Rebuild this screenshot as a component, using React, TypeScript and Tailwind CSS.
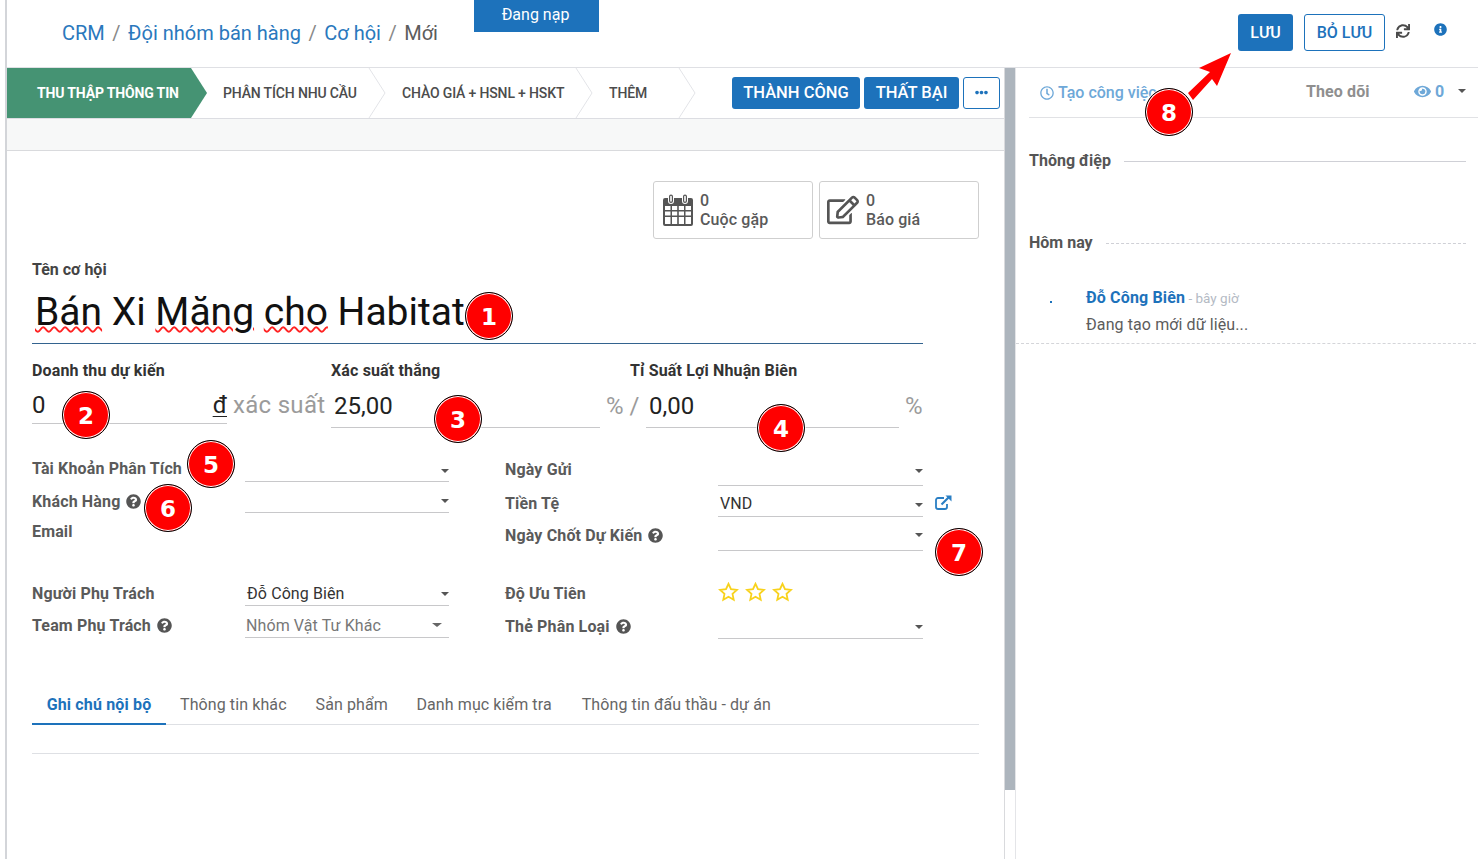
import React from "react";
import { FaRegEdit, FaQuestionCircle, FaInfoCircle, FaRegClock, FaEye, FaSync, FaEllipsisH } from "react-icons/fa";

const Help = () => <FaQuestionCircle className="inline-block ml-[6px] text-[15px] text-[#555] align-[-2px]" />;
const Caret = ({ className = "" }: { className?: string }) => (
  <span className={"w-0 h-0 border-x-[4px] border-x-transparent border-t-[4px] border-t-[#555] " + className} />
);

function Marker({ n, className }: { n: number; className: string }) {
  return (
    <div className={"absolute w-[48px] h-[48px] pt-[2px] rounded-full bg-[#ff0000] border border-black shadow-[inset_0_0_0_1px_#fff,0_0_0_1px_rgba(255,255,255,0.7)] flex items-center justify-center text-white text-[23px] font-bold font-['DejaVu_Sans',sans-serif] leading-none " + className}>
      {n}
    </div>
  );
}

function Stage({ label, className }: { label: string; className: string }) {
  return (
    <div className={"relative h-full flex items-center shrink-0 text-[14px] font-medium text-[#4c4c4c] tracking-[-0.15px] " + className}>
      {label}
      <svg className="absolute right-0 top-0" width="18" height="50" viewBox="0 0 18 50">
        <path d="M1 0 L17 25 L1 50" fill="none" stroke="#e3e4e8" strokeWidth="1" />
      </svg>
    </div>
  );
}

function Field({ value, muted, bar, caret = "", text = "", children }: { value?: string; muted?: boolean; bar: string; caret?: string; text?: string; children?: React.ReactNode }) {
  return (
    <div className={"relative flex items-center justify-between border-b border-[#c8c8ca] text-[16px] tracking-[0.1px] " + bar}>
      <span className={(muted ? "text-[#777] pl-[1px] " : "text-[#333] pl-[2px] ") + text}>{value}</span>
      <Caret className={caret} />
      {children}
    </div>
  );
}

function Label({ children, className = "" }: { children: React.ReactNode; className?: string }) {
  return <div className={"font-bold text-[16px] text-[#5a5a5a] tracking-[0.15px] whitespace-nowrap " + className}>{children}</div>;
}

function CalendarIcon() {
  return (
    <svg width="30" height="32" viewBox="0 0 30 32" fill="#555">
      <path fillRule="evenodd" d="M2 4h3v3a3 3 0 0 0 6 0V4h8v3a3 3 0 0 0 6 0V4h3a2 2 0 0 1 2 2v24a2 2 0 0 1-2 2H2a2 2 0 0 1-2-2V6a2 2 0 0 1 2-2Zm0 8v4h5.5v-4H2Zm7 0v4h5.2v-4H9Zm6.8 0v4H21v-4h-5.2Zm6.7 0v4H28v-4h-5.5ZM2 17.5v4h5.5v-4H2Zm7 0v4h5.2v-4H9Zm6.8 0v4H21v-4h-5.2Zm6.7 0v4H28v-4h-5.5ZM2 23v6.5a.5.5 0 0 0 .5.5h5v-7H2Zm7 0v7h5.2v-7H9Zm6.8 0v7H21v-7h-5.2Zm6.7 0v7h5a.5.5 0 0 0 .5-.5V23h-5.5Z" />
      <path fillRule="evenodd" d="M6 2.5a2 2 0 0 1 4 0V7a2 2 0 0 1-4 0V2.5Zm1.2 0V7a.8.8 0 0 0 1.6 0V2.5a.8.8 0 0 0-1.6 0ZM20 2.5a2 2 0 0 1 4 0V7a2 2 0 0 1-4 0V2.5Zm1.2 0V7a.8.8 0 0 0 1.6 0V2.5a.8.8 0 0 0-1.6 0Z" />
    </svg>
  );
}

function ExternalIcon() {
  return (
    <svg width="17" height="15" viewBox="0 0 17 15" fill="none" stroke="#2a7fc4" strokeWidth="1.8">
      <path d="M9 3H3a2 2 0 0 0-2 2v7a2 2 0 0 0 2 2h7a2 2 0 0 0 2-2V9" />
      <path d="M6.5 9.5 14 2" strokeWidth="2.2" />
      <path d="M10.5 0.5H16.5V6.5Z" fill="#2a7fc4" stroke="none" />
    </svg>
  );
}

const wavy = "underline decoration-wavy decoration-[#f22] decoration-[1.5px] underline-offset-[1px]";

export default function App() {
  const blueBtn = "bg-[#1d72bb] text-white rounded-[3px] font-medium flex items-center justify-center";
  return (
    <div className="relative w-[1478px] h-[859px] overflow-hidden bg-white font-['Roboto',sans-serif] text-[#333]">
      <div className="ml-[5px] h-full border-l-2 border-[#d3d5d9] flex flex-col">
        {/* header */}
        <header className="h-[67px] shrink-0 flex items-start justify-between">
          <nav className="pl-[55px] pt-[19px] text-[20px] leading-[28px] text-[#6a6a6a] flex">
            <span className="text-[#2a78bd]">CRM</span>
            <span className="mx-[7.5px] text-[#888]">/</span>
            <span className="text-[#2a78bd]">Đội nhóm bán hàng</span>
            <span className="mx-[7.5px] text-[#888]">/</span>
            <span className="text-[#2a78bd]">Cơ hội</span>
            <span className="mx-[7.5px] text-[#888]">/</span>
            <span className="text-[#5c5c5c]">Mới</span>
          </nav>
          <div className="flex items-start pt-[14px] pr-[31px]">
            <button className={blueBtn + " w-[55px] h-[37px] text-[16px]"}>LƯU</button>
            <button className="ml-[11px] w-[81px] h-[37px] rounded-[3px] border border-[#1d72bb] text-[#1d72bb] font-medium text-[16px]">BỎ LƯU</button>
            <FaSync className="ml-[11px] mt-[10px] text-[14px] text-[#4a4a4a]" />
            <FaInfoCircle className="ml-[24px] mt-[9px] text-[13px] text-[#1d72bb]" />
          </div>
        </header>

        <div className="flex-1 flex border-t border-[#dfe0e4] min-h-0">
          {/* main form */}
          <main className="w-[998px] shrink-0 border-r border-[#d9dadd] flex flex-col">
            <div className="h-[51px] shrink-0 border-b border-[#dcdde2] flex items-center justify-between pr-[4px]">
              <div className="flex h-full">
                <div className="w-[200px] h-full bg-[#459373] text-white text-[14px] font-bold flex items-center pl-[30px] tracking-[-0.15px] [clip-path:polygon(0_0,184px_0,200px_50%,184px_100%,0_100%)]">
                  THU THẬP THÔNG TIN
                </div>
                <Stage label="PHÂN TÍCH NHU CẦU" className="w-[179px] pl-[16px]" />
                <Stage label="CHÀO GIÁ + HSNL + HSKT" className="w-[207px] pl-[16px]" />
                <Stage label="THÊM" className="w-[103px] pl-[16px]" />
              </div>
              <div className="flex items-center gap-[4px] mb-[1px]">
                <button className={blueBtn + " w-[128px] h-[32px] pt-[1px] text-[16.5px]"}>THÀNH CÔNG</button>
                <button className={blueBtn + " w-[95px] h-[32px] pt-[1px] text-[16.5px]"}>THẤT BẠI</button>
                <button className="w-[37px] h-[32px] rounded-[3px] border border-[#1d72bb] text-[#1d72bb] flex items-center justify-center">
                  <FaEllipsisH className="text-[13px]" />
                </button>
              </div>
            </div>
            <div className="h-[32px] shrink-0 bg-[#f7f8f8] border-b border-[#d9dadd]" />

            {/* sheet */}
            <div className="flex-1 pl-[25px] pr-[25px] pt-[30px]">
              <div className="flex justify-end gap-[6px]">
                <div className="w-[160px] h-[58px] rounded-[3px] border border-[#cfcfcf] flex items-center pl-[9px]">
                  <CalendarIcon />
                  <div className="ml-[7px] text-[16px] leading-[19px] text-[#5a5a5a] font-medium tracking-[0.1px]"><div>0</div><div>Cuộc gặp</div></div>
                </div>
                <div className="w-[160px] h-[58px] rounded-[3px] border border-[#cfcfcf] flex items-center pl-[7px]">
                  <FaRegEdit className="text-[32px] text-[#555]" />
                  <div className="ml-[7px] text-[16px] leading-[19px] text-[#5a5a5a] font-medium tracking-[0.1px]"><div>0</div><div>Báo giá</div></div>
                </div>
              </div>

              <div className="mt-[21px] text-[16px] leading-[19px] font-bold text-[#444]">Tên cơ hội</div>
              <div className="w-[891px] h-[65px] pt-[7px] border-b border-[#33638f] text-[39px] leading-[53px] text-[#111] pl-[3px] whitespace-nowrap">
                <span className={wavy}>Bán</span> Xi <span className={wavy}>Măng</span> <span className={wavy}>cho</span> Habitat
              </div>

              <div className="flex mt-[17px] text-[16px] leading-[19px] font-bold text-[#333] tracking-[0.15px]">
                <div className="w-[299px]">Doanh thu dự kiến</div>
                <div className="w-[299px]">Xác suất thắng</div>
                <div>Tỉ Suất Lợi Nhuận Biên</div>
              </div>
              <div className="flex items-start mt-[11px] h-[64px] text-[24px] leading-[28px] text-[#222]">
                <div className="w-[195px] h-[33px] border-b border-[#c8c8ca] flex justify-between">
                  <span>0</span><span className="underline decoration-1 underline-offset-[3px]">đ</span>
                </div>
                <span className="ml-[6px] w-[98px] text-[#9b9b9b] tracking-[0.3px] whitespace-nowrap">xác suất</span>
                <div className="w-[269px] h-[37px] border-b border-[#c8c8ca] pl-[3px] pt-[1px] flex items-start"><span>25,00</span></div>
                <span className="ml-[6px] w-[40px] text-[#9b9b9b] whitespace-nowrap mt-[1px]">% /</span>
                <div className="w-[253px] h-[37px] border-b border-[#c8c8ca] pl-[3px] pt-[1px] flex items-start"><span>0,00</span></div>
                <span className="ml-[6px] text-[#9b9b9b] mt-[1px]">%</span>
              </div>

              <div className="flex">
                {/* left group */}
                <div className="w-[473px] flex flex-col">
                  <div className="flex h-[27px]"><Label className="w-[213px] self-center pt-[1px]">Tài Khoản Phân Tích</Label><Field bar="w-[204px]" caret="mt-[6px]" /></div>
                  <div className="flex h-[31px]"><Label className="w-[213px] pt-[8px]">Khách Hàng<Help /></Label><Field bar="w-[204px]" caret="mt-[7px]" /></div>
                  <Label className="h-[61px] pt-[7px]">Email</Label>
                  <div className="flex h-[32px]"><Label className="w-[213px] pt-[8px]">Người Phụ Trách</Label><Field bar="w-[204px]" value="Đỗ Công Biên" text="mt-[8px]" caret="mt-[8px]" /></div>
                  <div className="flex h-[32px]"><Label className="w-[213px] pt-[8px]">Team Phụ Trách<Help /></Label><Field bar="w-[204px] pr-[7px]" muted value="Nhóm Vật Tư Khác" text="mt-[8px]" caret="border-x-[5px] border-t-[#666] mt-[6px]" /></div>
                </div>
                {/* right group */}
                <div className="flex flex-col">
                  <div className="flex h-[31px]"><Label className="w-[213px] pt-[3px]">Ngày Gửi</Label><Field bar="w-[205px]" caret="mt-[1px]" /></div>
                  <div className="flex h-[31px]">
                    <Label className="w-[213px] pt-[6px]">Tiền Tệ</Label>
                    <Field bar="w-[205px]" value="VND" text="mt-[6px]" caret="mt-[8px]">
                      <span className="absolute left-[217px] top-[9px]"><ExternalIcon /></span>
                    </Field>
                  </div>
                  <div className="flex h-[34px]"><Label className="w-[213px] pt-[7px]">Ngày Chốt Dự Kiến<Help /></Label><Field bar="w-[205px]" caret="mt-[2px]" /></div>
                  <div className="flex h-[55px] items-end pb-[4px]">
                    <Label className="w-[213px] self-end mb-[-4px]">Độ Ưu Tiên</Label>
                    <div className="flex gap-[6px]">
                      {[0, 1, 2].map((i) => (
                        <svg key={i} width="21" height="20" viewBox="0 0 21 20" fill="none" stroke="#f8d21c" strokeWidth="1.8">
                          <path d="M10.5 1.8 13 7.2l5.9.7-4.4 4 1.2 5.9-5.2-3-5.2 3 1.2-5.9-4.4-4 5.9-.7Z" />
                        </svg>
                      ))}
                    </div>
                  </div>
                  <div className="flex h-[33px]"><Label className="w-[213px] pt-[9px]">Thẻ Phân Loại<Help /></Label><Field bar="w-[205px]" caret="mt-[9px]" /></div>
                </div>
              </div>

              {/* tabs */}
              <div className="mt-[45px] flex h-[41px] border-b border-[#dee0e4] text-[16px] text-[#666] w-[947px] tracking-[0.1px]">
                <div className="w-[134px] text-center pt-[9px] font-bold text-[#1d72bb] border-b-2 border-[#1d72bb] h-[41px] tracking-[0.15px]">Ghi chú nội bộ</div>
                <div className="pl-[14px] pr-[15px] pt-[9px]">Thông tin khác</div>
                <div className="pl-[14px] pr-[14px] pt-[9px]">Sản phẩm</div>
                <div className="pl-[14.5px] pr-[15px] pt-[9px]">Danh mục kiểm tra</div>
                <div className="pl-[15px] pt-[9px]">Thông tin đấu thầu - dự án</div>
              </div>
              <div className="h-[29px] border-b border-[#dee0e4] w-[947px]" />
            </div>
          </main>

          {/* scrollbar */}
          <div className="w-[11px] shrink-0 border-r border-[#e4e5e8]">
            <div className="w-[10px] h-[722px] bg-[#adb5bd]" />
          </div>

          {/* chatter */}
          <aside className="flex-1 flex flex-col">
            <div className="ml-[13px] h-[50px] shrink-0 border-b border-[#e1e2e5] flex items-center text-[16px] relative">
              <FaRegClock className="ml-[11px] text-[14px] text-[#6ea8d8]" />
              <span className="ml-[4px] text-[#6ea8d8] font-medium">Tạo công việc</span>
              <span className="absolute left-[277px] top-[12px] font-bold text-[#8f8f8f] tracking-[0.1px]">Theo dõi</span>
              <FaEye className="absolute left-[385px] top-[15px] text-[17px] text-[#6ea8d8]" />
              <span className="absolute left-[406px] top-[12px] font-bold text-[#6ea8d8]">0</span>
              <Caret className="absolute left-[429px] top-[21px] border-t-[#6ea8d8]" />
            </div>
            <div className="ml-[13px] mr-[12px] mt-[33px] flex items-center h-[19px]">
              <span className="font-bold text-[16px] text-[#555]">Thông điệp</span>
              <span className="flex-1 ml-[13px] border-t border-[#cfd0d6] mt-[2px]" />
            </div>
            <div className="ml-[13px] mr-[12px] mt-[63px] flex items-center h-[19px]">
              <span className="font-bold text-[16px] text-[#555]">Hôm nay</span>
              <span className="flex-1 ml-[13px] border-t border-dashed border-[#cfd0d6] mt-[2px]" />
            </div>
            <div className="mt-[27px] mr-[2px] h-[65px] border-b border-dashed border-[#d4d5d9] flex">
              <div className="w-[70px] pl-[34px] pt-[22px]"><span className="block w-[2px] h-[2px] bg-[#1d72bb]" /></div>
              <div>
                <div className="leading-[19px] whitespace-nowrap mt-[9px]">
                  <span className="font-bold text-[16px] text-[#1d72bb] tracking-[0.15px]">Đỗ Công Biên</span>
                  <span className="text-[13.5px] text-[#b4bac4]"> - bây giờ</span>
                </div>
                <div className="mt-[7px] text-[16px] leading-[19px] text-[#5c5c5c] tracking-[0.1px]">Đang tạo mới dữ liệu...</div>
              </div>
            </div>
          </aside>
        </div>
      </div>

      {/* loading toast */}
      <div className="absolute left-[474px] top-0 w-[125px] h-[32px] pb-[2px] bg-[#1d72bb] text-white text-[16px] flex items-center justify-center pr-[2px]">Đang nạp</div>

      {/* annotations */}
      <svg className="absolute left-[1180px] top-[45px]" width="60" height="60" viewBox="0 0 60 60">
        <path d="M8 48 L30 27 L19 23 L51 8 L37 41 L32 34 L13 55 Z" fill="#ff0000" />
      </svg>
      <Marker n={1} className="left-[465px] top-[292px]" />
      <Marker n={2} className="left-[62px] top-[391px]" />
      <Marker n={3} className="left-[434px] top-[395px]" />
      <Marker n={4} className="left-[757px] top-[404px]" />
      <Marker n={5} className="left-[187px] top-[440px]" />
      <Marker n={6} className="left-[144px] top-[484px]" />
      <Marker n={7} className="left-[935px] top-[528px]" />
      <Marker n={8} className="left-[1145px] top-[88px]" />
    </div>
  );
}
